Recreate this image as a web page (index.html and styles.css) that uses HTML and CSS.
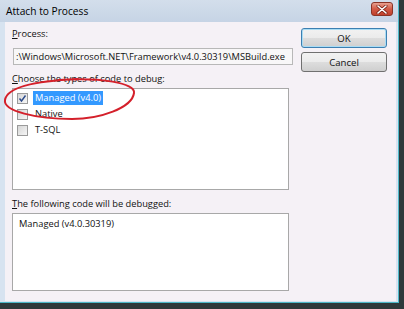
FILE: index.html
```html
<!DOCTYPE html>
<html lang="en">
<head>
  <meta charset="UTF-8">
  <meta name="viewport" content="width=device-width, initial-scale=1.0">
  <title>Attach to Process</title>
  <link rel="stylesheet" href="styles.css">
</head>
<body>
  <div class="window">
    <div class="titlebar">
      <span class="title">Attach to Process</span>
      <span class="close">
        <svg width="12" height="9" viewBox="0 0 12 9">
          <path d="M2 1 L10 8 M10 1 L2 8" stroke="#7a2418" stroke-width="3" stroke-linecap="round"/>
          <path d="M2 1 L10 8 M10 1 L2 8" stroke="#fff" stroke-width="1.6" stroke-linecap="round"/>
        </svg>
      </span>
    </div>

    <div class="client">
      <div class="main">
        <div class="label"><u>P</u>rocess:</div>
        <div class="textbox">:\Windows\Microsoft.NET\Framework\v4.0.30319\MSBuild.exe</div>

        <div class="label"><u>C</u>hoose the types of code to debug:</div>
        <div class="listbox types">
          <div class="item">
            <span class="check">
              <svg width="9" height="9" viewBox="0 0 9 9">
                <path d="M1.5 4.5 L3.5 7 L7.5 1.5" fill="none" stroke="#2b4a8a" stroke-width="1.4"/>
              </svg>
            </span>
            <span class="item-text selected">Managed (v4.0)</span>
          </div>
          <div class="item">
            <span class="check"></span>
            <span class="item-text">Native</span>
          </div>
          <div class="item">
            <span class="check"></span>
            <span class="item-text">T-SQL</span>
          </div>
        </div>

        <div class="label"><u>T</u>he following code will be debugged:</div>
        <div class="listbox output">Managed (v4.0.30319)</div>
      </div>

      <div class="buttons">
        <button class="btn default">OK</button>
        <button class="btn">Cancel</button>
      </div>
    </div>

    <!-- hand drawn mark from the blog post -->
    <svg class="annotation" width="150" height="50" viewBox="0 0 150 50">
      <path d="M58 4 C 100 1, 136 7, 134 17 C 132 32, 100 43, 72 43 C 36 43, 3 35, 5 24 C 7 12, 32 5, 78 3"
            fill="none" stroke="#d4202b" stroke-width="2"/>
    </svg>
  </div>
</body>
</html>
```

FILE: styles.css
```css
body {
  margin: 0;
  background: #2e393b;
  font-family: "Open Sans", "Noto Sans", sans-serif;
  font-size: 9.3px;
  color: #111;
}
.window {
  position: relative;
  width: 399px;
  height: 303px;
  background: #d7e3f0;
  border-right: 1px solid #4bb8c8;
  border-bottom: 1px solid #4bb8c8;
  box-sizing: border-box;
}
.titlebar {
  height: 22px;
  display: flex;
  align-items: center;
  justify-content: space-between;
  padding: 0 5px 0 6px;
  background: linear-gradient(#d3deeb, #c6d4e5);
  box-sizing: border-box;
}
.title {
  font-size: 10.2px;
  color: #000;
}
.close {
  width: 22px;
  height: 14px;
  margin-top: -4px;
  border: 1px solid #8a3426;
  border-radius: 3px;
  background: linear-gradient(#e8a08f, #d25a45 50%, #c0402c);
  display: flex;
  align-items: center;
  justify-content: center;
  box-sizing: border-box;
}
.client {
  display: flex;
  gap: 8px;
  margin: 0 2px 0 5px;
  height: 279px;
  background: #f5f1f6;
}
.main {
  width: 281px;
  padding: 5px 0 0 7px;
}
.label {
  height: 13px;
  line-height: 13px;
}
.label u {
  text-decoration-thickness: 1px;
}
.textbox {
  height: 17px;
  line-height: 15px;
  margin: 8px 0 7px 1px;
  padding: 0 2px;
  border: 1px solid #b8b8b8;
  background: #f8f7f8;
  white-space: nowrap;
  overflow: hidden;
  box-sizing: border-box;
}
.listbox {
  width: 277px;
  margin-top: 3px;
  border: 1px solid #a8a8a8;
  background: #fff;
  box-sizing: border-box;
}
.types {
  height: 102px;
  margin-bottom: 7px;
  padding-top: 1px;
}
.item {
  display: flex;
  align-items: center;
  height: 16px;
  padding-left: 4px;
}
.check {
  width: 11px;
  height: 11px;
  margin-right: 5px;
  border: 1px solid #9a9a9a;
  background: linear-gradient(135deg, #d6d6d6, #f6f6f6);
  display: flex;
  align-items: center;
  justify-content: center;
  box-sizing: border-box;
}
.item-text {
  padding: 1px 2px;
  line-height: 12px;
}
.selected {
  background: #3399ff;
  color: #fff;
}
.output {
  height: 78px;
  padding: 3px 6px;
  line-height: 13px;
}
.buttons {
  display: flex;
  flex-direction: column;
  gap: 4px;
  padding-top: 6px;
}
.btn {
  width: 86px;
  height: 20px;
  padding: 0;
  font-family: inherit;
  font-size: 9.6px;
  color: #111;
  border: 1px solid #707070;
  border-radius: 3px;
  background: linear-gradient(#f2f2f2 0%, #ebebeb 50%, #dddddd 51%, #cfcfcf 100%);
}
.btn.default {
  border-color: #3c7fb1;
  box-shadow: inset 0 0 0 1px #a9dcf4;
}
.annotation {
  position: absolute;
  left: 0;
  top: 76px;
}
```
